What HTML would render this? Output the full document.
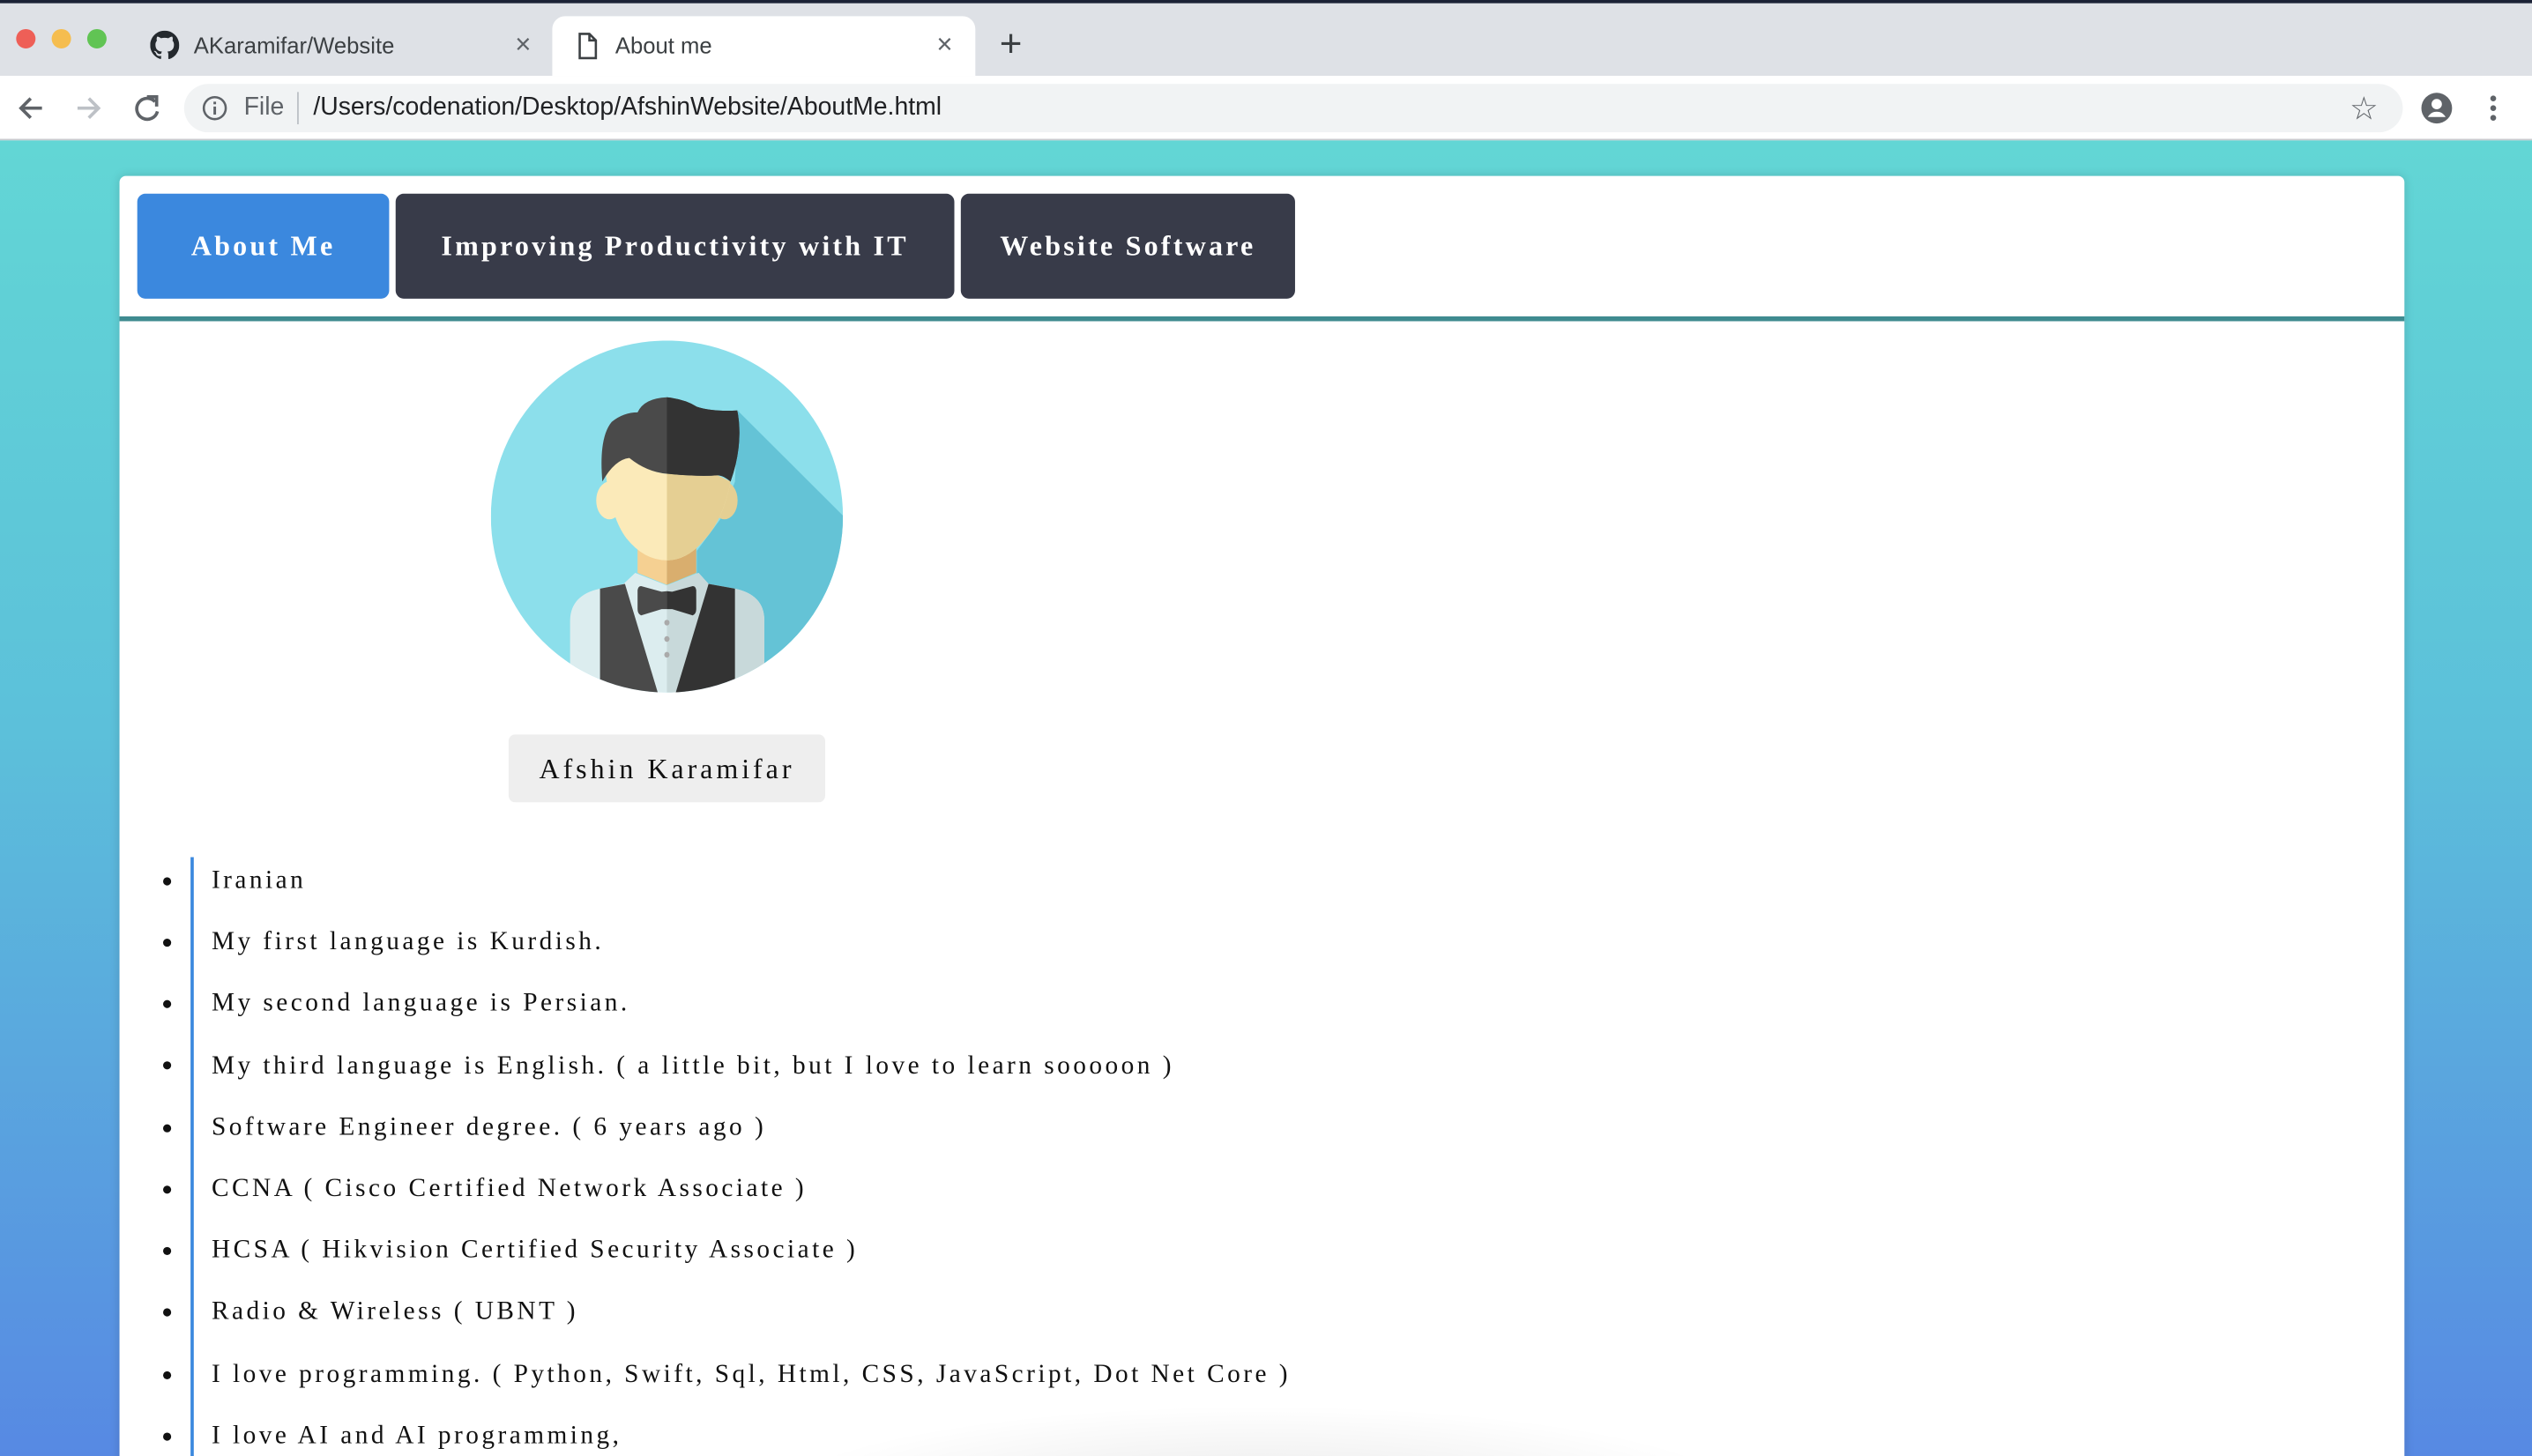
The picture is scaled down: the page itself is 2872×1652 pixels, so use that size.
<!DOCTYPE html>
<html><head><meta charset="utf-8">
<style>
html,body{margin:0;padding:0;width:2872px;height:1652px;overflow:hidden;background:#fff}
#w{position:absolute;left:0;top:0;width:1568px;height:902px;transform:scale(1.83163,1.83149);transform-origin:0 0;font-family:"Liberation Sans",sans-serif;overflow:hidden}
.abs{position:absolute}
#tabs{left:0;top:0;width:1568px;height:47px;background:#dee1e6;border-top:2px solid #1b2236;box-sizing:border-box}
.dot{position:absolute;top:18px;width:12px;height:12px;border-radius:50%}
.tab{position:absolute;top:28px;font-size:14px;color:#3c4043;transform:translateY(-50%)}
#active{left:342px;top:10px;width:262px;height:37px;background:#fff;border-radius:8px 8px 0 0}
#bar{left:0;top:47px;width:1568px;height:40px;background:#fff;border-bottom:1px solid #c9cbcf;box-sizing:border-box}
#omni{left:114px;top:52px;width:1374px;height:30px;background:#f1f3f4;border-radius:15px}
#page{left:0;top:87px;width:1568px;height:815px;background:linear-gradient(180deg,#62d6d5 0%,#5cc0da 45%,#5789e3 100%)}
#card{left:74px;top:109px;width:1415px;height:800px;background:#fff;border-radius:4px 4px 0 0;box-shadow:0 0 6px rgba(0,0,0,.15)}
.nav{position:absolute;top:120px;height:65px;border-radius:5px;color:#fff;font-family:"Liberation Serif",serif;font-weight:bold;font-size:17.5px;letter-spacing:1.75px;display:flex;align-items:center;justify-content:center}
#line{left:74px;top:196px;width:1415px;height:3px;background:#3f8b90}
#name{left:315px;top:455px;width:196px;height:42px;background:#eeeeee;border-radius:4px;font-family:"Liberation Serif",serif;font-size:17.5px;letter-spacing:2.15px;color:#111;display:flex;align-items:center;justify-content:center}
#list{left:118px;top:531px;width:2px;height:380px;background:#3b88de}
.li{position:absolute;left:131px;font-family:"Liberation Serif",serif;font-size:16px;letter-spacing:1.9px;color:#111;transform:translateY(-50%);margin-top:1px}
.bul{position:absolute;left:101px;width:5px;height:5px;border-radius:50%;background:#111;transform:translateY(-50%)}
#fade{left:470px;top:870px;width:620px;height:60px;background:radial-gradient(ellipse at 50% 100%,rgba(0,0,0,.09),rgba(0,0,0,0) 70%)}
</style></head><body>
<div id="w">
<div id="tabs" class="abs"></div>
<div class="dot" style="left:10px;background:#ee5f57"></div>
<div class="dot" style="left:32px;background:#f5bd4f"></div>
<div class="dot" style="left:54px;background:#61c454"></div>
<svg class="abs" style="left:93px;top:19px" width="18" height="18" viewBox="0 0 16 16"><path fill="#24292e" d="M8 0C3.580 0 0 3.58 0 8c0 3.54 2.29 6.53 5.470 7.59.4.07.55-.17.55-.38v-1.330c-2.230.48-2.7-1.07-2.7-1.070-.36-.92-.89-1.17-.89-1.170-.73-.5.05-.49.05-.49.8.06 1.23.83 1.23.83.72 1.22 1.87.87 2.33.66.07-.52.28-.87.5-1.070-1.780-.2-3.640-.89-3.640-3.95 0-.87.31-1.59.82-2.150-.08-.2-.36-1.02.08-2.12 0 0 .67-.21 2.2.82a7.6 7.6 0 0 1 4 0c1.530-1.04 2.2-.82 2.2-.82.44 1.1.16 1.92.08 2.12.51.56.82 1.27.82 2.15 0 3.070-1.87 3.75-3.65 3.95.29.25.54.73.54 1.48v2.2c0 .21.15.46.55.38A8.01 8.01 0 0 0 16 8c0-4.420-3.580-8-8-8z"/></svg>
<div class="tab" style="left:120px">AKaramifar/Website</div>
<div class="tab" style="left:319px;font-size:17px;color:#5f6368">×</div>
<div id="active" class="abs"></div>
<svg class="abs" style="left:357px;top:20px" width="14" height="17" viewBox="0 0 14 17"><path d="M2 1h6l4 4v11H2z M8 1v4h4" fill="none" stroke="#3c4043" stroke-width="1.4"/></svg>
<div class="tab" style="left:381px">About me</div>
<div class="tab" style="left:580px;font-size:17px;color:#5f6368">×</div>
<div class="tab" style="left:619px;font-size:24px;color:#3c4043;font-weight:300">+</div>
<div id="bar" class="abs"></div>
<svg class="abs" style="left:10px;top:57px" width="100" height="20" viewBox="0 0 100 20"><path d="M16 10H3M9 4L3 10l6 6" fill="none" stroke="#5f6368" stroke-width="2"/><path d="M38 10h13M45 4l6 6-6 6" fill="none" stroke="#bdc1c6" stroke-width="2"/><path d="M86 6a6.5 6.5 0 1 0 1.5 6" fill="none" stroke="#5f6368" stroke-width="2"/><path d="M81 3h6v6" fill="none" stroke="#5f6368" stroke-width="2"/></svg>
<div id="omni" class="abs"></div>
<svg class="abs" style="left:125px;top:59px" width="16" height="16" viewBox="0 0 16 16"><circle cx="8" cy="8" r="6.8" fill="none" stroke="#5f6368" stroke-width="1.4"/><rect x="7.2" y="7" width="1.6" height="5" fill="#5f6368"/><rect x="7.2" y="4" width="1.6" height="1.6" fill="#5f6368"/></svg>
<div class="abs" style="left:151px;top:58px;font-size:15.5px;color:#5f6368">File</div>
<div class="abs" style="left:184px;top:57px;width:1px;height:20px;background:#bdc1c6"></div>
<div class="abs" style="left:194px;top:58px;font-size:15.5px;color:#202124">/Users/codenation/Desktop/AfshinWebsite/AboutMe.html</div>
<div class="abs" style="left:1455px;top:55px;font-size:20px;color:#5f6368">☆</div>
<svg class="abs" style="left:1499px;top:57px" width="20" height="20" viewBox="0 0 20 20"><circle cx="10" cy="10" r="9.5" fill="#5f6368"/><circle cx="10" cy="7.5" r="3.2" fill="#fff"/><path d="M4.5 15.5c1.5-2.5 3.5-3.3 5.5-3.3s4 .8 5.5 3.3" fill="#fff"/></svg>
<svg class="abs" style="left:1540px;top:58px" width="8" height="18" viewBox="0 0 8 18"><circle cx="4" cy="3" r="1.8" fill="#5f6368"/><circle cx="4" cy="9" r="1.8" fill="#5f6368"/><circle cx="4" cy="15" r="1.8" fill="#5f6368"/></svg>
<div id="page" class="abs"></div>
<div id="card" class="abs"></div>
<div class="nav" style="left:85px;width:156px;background:#3b88de">About Me</div>
<div class="nav" style="left:245px;width:346px;background:#383b49">Improving Productivity with IT</div>
<div class="nav" style="left:595px;width:207px;background:#383b49">Website Software</div>
<div id="line" class="abs"></div>
<svg class="abs" style="left:304px;top:211px" width="218" height="218" viewBox="168 72 1200 1118" preserveAspectRatio="none">
<defs>
<clipPath id="c"><ellipse cx="768" cy="631" rx="600" ry="559"/></clipPath>
<clipPath id="r"><rect x="768" y="0" width="800" height="1400"/></clipPath>
</defs>
<ellipse cx="768" cy="631" rx="600" ry="559" fill="#8cdfeb"/>
<g clip-path="url(#c)">
<polygon points="1010,295 1368,628 1368,1190 870,1190 870,740 950,640 1000,520" fill="#64c3d6"/>
<path d="M438 1200 L438 960 Q440 880 540 860 L620 845 L660 810 L768 850 L876 810 L910 845 L1000 860 Q1100 880 1100 960 L1100 1200 Z" fill="#dcedef"/>
<path d="M438 1200 L438 960 Q440 880 540 860 L620 845 L660 810 L768 850 L876 810 L910 845 L1000 860 Q1100 880 1100 960 L1100 1200 Z" fill="#c8d9da" clip-path="url(#r)"/>
<polygon points="540,860 625,845 740,1200 540,1200" fill="#4a4a4a"/>
<polygon points="910,845 1000,860 1000,1200 795,1200" fill="#333"/>
</g>
<polygon points="668,700 768,700 768,848 668,810" fill="#f5d092"/>
<polygon points="768,700 868,700 868,810 768,848" fill="#d9ae6e"/>
<ellipse cx="572" cy="580" rx="45" ry="60" fill="#fbeab9"/>
<ellipse cx="964" cy="580" rx="45" ry="60" fill="#e5cf93"/>
<path d="M560 500 Q600 440 640 440 Q700 490 768 495 Q880 505 940 500 L985 520 Q960 640 900 700 Q840 770 768 770 Q690 770 630 700 Q580 640 560 500 Z" fill="#fbeab9"/>
<path d="M560 500 Q600 440 640 440 Q700 490 768 495 Q880 505 940 500 L985 520 Q960 640 900 700 Q840 770 768 770 Q690 770 630 700 Q580 640 560 500 Z" fill="#e5cf93" clip-path="url(#r)"/>
<path d="M548 520 Q535 380 580 330 Q620 300 668 300 Q690 255 768 252 Q830 258 870 282 Q920 298 1008 294 Q1030 400 985 520 Q960 500 940 500 Q880 505 768 495 Q700 490 640 445 Q590 450 548 520 Z" fill="#4a4a4a"/>
<path d="M548 520 Q535 380 580 330 Q620 300 668 300 Q690 255 768 252 Q830 258 870 282 Q920 298 1008 294 Q1030 400 985 520 Q960 500 940 500 Q880 505 768 495 Q700 490 640 445 Q590 450 548 520 Z" fill="#333" clip-path="url(#r)"/>
<path d="M680 852 L750 870 L768 868 L768 925 L750 925 L680 945 Q668 940 668 925 L668 865 Q670 852 680 852 Z" fill="#4a4a4a"/>
<path d="M856 852 L786 870 L768 868 L768 925 L786 925 L856 945 Q868 940 868 925 L868 865 Q866 852 856 852 Z" fill="#333"/>
<ellipse cx="768" cy="968" rx="9" ry="9" fill="#aaa"/>
<ellipse cx="768" cy="1020" rx="9" ry="9" fill="#aaa"/>
<ellipse cx="768" cy="1070" rx="9" ry="9" fill="#aaa"/>
</svg>
<div id="name" class="abs">Afshin Karamifar</div>
<div id="list" class="abs"></div>
<div class="bul" style="top:546px"></div><div class="li" style="top:545px">Iranian</div>
<div class="bul" style="top:584px"></div><div class="li" style="top:583px">My first language is Kurdish.</div>
<div class="bul" style="top:622px"></div><div class="li" style="top:621px">My second language is Persian.</div>
<div class="bul" style="top:660px"></div><div class="li" style="top:660px">My third language is English. ( a little bit, but I love to learn sooooon )</div>
<div class="bul" style="top:699px"></div><div class="li" style="top:698px">Software Engineer degree. ( 6 years ago )</div>
<div class="bul" style="top:737px"></div><div class="li" style="top:736px">CCNA ( Cisco Certified Network Associate )</div>
<div class="bul" style="top:775px"></div><div class="li" style="top:774px">HCSA ( Hikvision Certified Security Associate )</div>
<div class="bul" style="top:813px"></div><div class="li" style="top:812px">Radio &amp; Wireless ( UBNT )</div>
<div class="bul" style="top:852px"></div><div class="li" style="top:851px">I love programming. ( Python, Swift, Sql, Html, CSS, JavaScript, Dot Net Core )</div>
<div class="bul" style="top:890px"></div><div class="li" style="top:889px">I love AI and AI programming,</div>
<div id="fade" class="abs"></div>
</div>
</body></html>
